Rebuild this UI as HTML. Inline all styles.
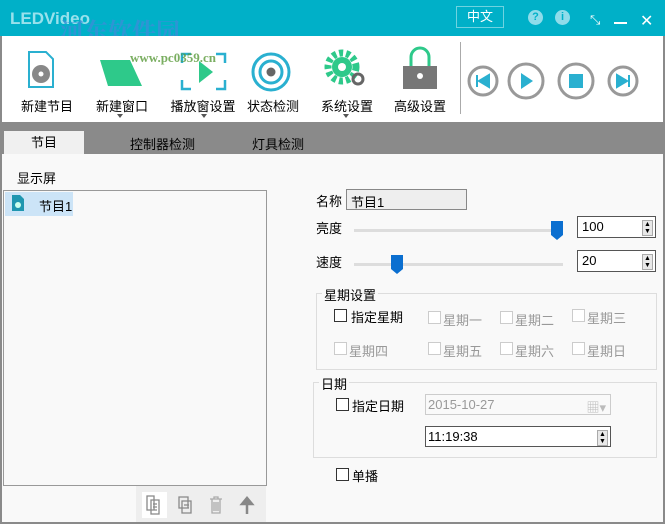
<!DOCTYPE html><html><head><meta charset="utf-8"><style>
*{margin:0;padding:0;box-sizing:border-box}
body{width:665px;height:524px;overflow:hidden;font-family:"Liberation Sans","Noto Sans CJK SC",sans-serif;font-size:13px;color:#000;background:#8a8a8a;position:relative}
.a{position:absolute}
.cb{position:absolute;width:13px;height:13px;border:1px solid #333;background:#fff}
.cb.d{border-color:#ccc}
.g{color:#999}
.tl{font-size:13px;text-align:center;width:80px}
.spin{position:absolute;right:2px;top:3px;width:11px;height:16px;border:1px solid #aaa;background:#e8e8e8;font-size:7px;line-height:7px;text-align:center}
</style></head><body>
<div class="a" style="left:0;top:0;width:665px;height:36px;background:#00b0c8"></div>
<div class="a" style="left:10px;top:9px;color:#bfeef5;font-size:17px;font-weight:bold;opacity:.8">LEDVideo</div>
<div class="a" style="left:60px;top:12px;color:#3a8fd8;font-size:24px;font-weight:bold;font-family:'Noto Serif CJK SC',serif;opacity:.8">河东软件园</div>
<div class="a" style="left:456px;top:6px;width:48px;height:22px;border:1px solid #6fd3e0;color:#fff;font-size:13px;text-align:center;line-height:20px">中文</div>
<div class="a" style="left:528px;top:10px;width:15px;height:15px;border-radius:50%;background:#8fdcea;color:#00b0c8;font-size:11px;text-align:center;line-height:15px;font-weight:bold">?</div>
<div class="a" style="left:555px;top:10px;width:15px;height:15px;border-radius:50%;background:#8fdcea;color:#00b0c8;font-size:11px;text-align:center;line-height:15px;font-weight:bold">i</div>
<div class="a" style="left:590px;top:12px;color:#fff;font-size:13px">⤡</div>
<div class="a" style="left:614px;top:22px;width:13px;height:2px;background:#fff"></div>
<div class="a" style="left:640px;top:11px;color:#fff;font-size:16px">✕</div>
<div class="a" style="left:2px;top:36px;width:661px;height:86px;background:#fff"></div>
<svg class="a" style="left:0;top:36px" width="665" height="86">
<g><path d="M29 16h17l7 7v28H29z" fill="#fff" stroke="#2ab0d0" stroke-width="2"/><circle cx="41" cy="38" r="9" fill="#888"/><circle cx="41" cy="38" r="2.5" fill="#fff"/></g>
<path d="M100 24h30l12 26h-34z" fill="#2ec98a"/>
<g stroke="#2ab0d0" stroke-width="2.5" fill="none"><path d="M182 27v-9h9M216 18h9v9M225 44v9h-9M191 53h-9v-9"/></g><path d="M199 25l14 11-14 11z" fill="#2ec98a"/>
<circle cx="271" cy="36" r="18" fill="none" stroke="#2ab0d0" stroke-width="3"/><circle cx="271" cy="36" r="11" fill="none" stroke="#2ab0d0" stroke-width="3"/><circle cx="271" cy="36" r="4.5" fill="#666"/>
<circle cx="342" cy="31" r="14" fill="none" stroke="#2ec98a" stroke-width="7" stroke-dasharray="4 3"/><circle cx="342" cy="31" r="10" fill="#2ec98a"/><circle cx="342" cy="31" r="4" fill="#fff"/><circle cx="358" cy="43" r="5" fill="none" stroke="#666" stroke-width="3"/>
<path d="M411 30v-9a9 9 0 0 1 18 0v9" fill="none" stroke="#2ec98a" stroke-width="3"/><rect x="403" y="30" width="34" height="23" fill="#777"/><circle cx="420" cy="40" r="3" fill="#fff"/>
<line x1="460.5" y1="6" x2="460.5" y2="78" stroke="#aaa"/>
<circle cx="483" cy="45" r="14" fill="none" stroke="#999" stroke-width="3"/><path d="M477 39v12M489 39l-10 6 10 6z" stroke="#2ab0d0" fill="#2ab0d0" stroke-width="2"/>
<circle cx="526" cy="45" r="17" fill="none" stroke="#999" stroke-width="3"/><path d="M521 37l12 8-12 8z" fill="#2ab0d0"/>
<circle cx="576" cy="45" r="17" fill="none" stroke="#999" stroke-width="3"/><rect x="569" y="38" width="14" height="14" fill="#2ab0d0"/>
<circle cx="623" cy="45" r="14" fill="none" stroke="#999" stroke-width="3"/><path d="M629 39v12M617 39l10 6-10 6z" stroke="#2ab0d0" fill="#2ab0d0" stroke-width="2"/>
<g fill="#555"><path d="M117 78l3 4 3-4zM201 78l3 4 3-4zM343 78l3 4 3-4z"/></g>
</svg>
<div class="a" style="left:130px;top:50px;color:#5a9a3a;font-size:13px;font-weight:bold;font-family:'Liberation Serif',serif;opacity:.8">www.pc0359.cn</div>
<div class="a tl" style="left:7px;top:96px">新建节目</div>
<div class="a tl" style="left:82px;top:96px">新建窗口</div>
<div class="a tl" style="left:163px;top:96px">播放窗设置</div>
<div class="a tl" style="left:233px;top:96px">状态检测</div>
<div class="a tl" style="left:307px;top:96px">系统设置</div>
<div class="a tl" style="left:380px;top:96px">高级设置</div>
<div class="a" style="left:4px;top:131px;width:80px;height:23px;background:#f0f0f0;text-align:center;line-height:23px">节目</div>
<div class="a" style="left:130px;top:134px">控制器检测</div>
<div class="a" style="left:252px;top:134px">灯具检测</div>
<div class="a" style="left:2px;top:154px;width:661px;height:368px;background:#f9f9f9"></div>
<div class="a" style="left:17px;top:168px">显示屏</div>
<div class="a" style="left:3px;top:190px;width:264px;height:296px;border:1px solid #999;background:#f9f9f9"></div>
<div class="a" style="left:5px;top:192px;width:68px;height:24px;background:#cce4f7"></div>
<svg class="a" style="left:11px;top:194px" width="14" height="18"><path d="M1 1h8l4 4v12H1z" fill="#1f96b0"/><circle cx="7" cy="11" r="3" fill="#cfe"/></svg>
<div class="a" style="left:39px;top:196px">节目1</div>
<div class="a" style="left:136px;top:486px;width:130px;height:36px;background:#eee"></div>
<div class="a" style="left:142px;top:492px;width:25px;height:26px;background:#fff"></div>
<svg class="a" style="left:144px;top:494px" width="120" height="22" fill="none" stroke="#888" stroke-width="1.3">
<path d="M3 2h7v14H3z M7 6h8v14H7z M9 10h4M9 13h4M9 16h4"/>
<path d="M35 3h9v11h-9z M38 7h9v12h-9z M40 11h5M40 14h5"/>
<path d="M66 5h12M70 5v-2h4v2M68 5v14h8v-14M70 8v9M72 8v9M74 8v9" stroke="#aaa"/>
<path d="M103 20v-14M98 10l5-6 5 6z" stroke-width="2.5" fill="#888"/>
</svg>
<div class="a" style="left:316px;top:191px">名称</div>
<div class="a" style="left:346px;top:189px;width:121px;height:21px;border:1px solid #888;background:#eee;padding:2px 4px">节目1</div>
<div class="a" style="left:316px;top:218px">亮度</div>
<div class="a" style="left:354px;top:229px;width:209px;height:3px;background:#ddd"></div>
<svg class="a" style="left:551px;top:221px" width="13" height="20"><path d="M0 0h12v14l-6 5-6-5z" fill="#0b6fd0"/></svg>
<div class="a" style="left:577px;top:216px;width:79px;height:22px;border:1px solid #555;background:#fff;padding:2px 4px">100<div class="spin">▲<br>▼</div></div>
<div class="a" style="left:316px;top:252px">速度</div>
<div class="a" style="left:354px;top:263px;width:209px;height:3px;background:#ddd"></div>
<svg class="a" style="left:391px;top:255px" width="13" height="20"><path d="M0 0h12v14l-6 5-6-5z" fill="#0b6fd0"/></svg>
<div class="a" style="left:577px;top:250px;width:79px;height:22px;border:1px solid #555;background:#fff;padding:2px 4px">20<div class="spin">▲<br>▼</div></div>
<div class="a" style="left:316px;top:293px;width:341px;height:77px;border:1px solid #ddd"></div>
<div class="a" style="left:322px;top:285px;background:#f9f9f9;padding:0 2px">星期设置</div>
<div class="cb" style="left:334px;top:309px"></div><div class="a" style="left:351px;top:307px">指定星期</div>
<div class="cb d" style="left:428px;top:311px"></div><div class="a g" style="left:443px;top:310px">星期一</div>
<div class="cb d" style="left:500px;top:311px"></div><div class="a g" style="left:515px;top:310px">星期二</div>
<div class="cb d" style="left:572px;top:309px"></div><div class="a g" style="left:587px;top:308px">星期三</div>
<div class="cb d" style="left:334px;top:342px"></div><div class="a g" style="left:349px;top:341px">星期四</div>
<div class="cb d" style="left:428px;top:342px"></div><div class="a g" style="left:443px;top:341px">星期五</div>
<div class="cb d" style="left:500px;top:342px"></div><div class="a g" style="left:515px;top:341px">星期六</div>
<div class="cb d" style="left:572px;top:342px"></div><div class="a g" style="left:587px;top:341px">星期日</div>
<div class="a" style="left:313px;top:382px;width:344px;height:76px;border:1px solid #ddd"></div>
<div class="a" style="left:319px;top:374px;background:#f9f9f9;padding:0 2px">日期</div>
<div class="cb" style="left:336px;top:398px"></div><div class="a" style="left:352px;top:396px">指定日期</div>
<div class="a g" style="left:425px;top:394px;width:186px;height:21px;border:1px solid #ccc;background:#f9f9f9;padding:2px 2px">2015-10-27<span style="position:absolute;right:4px;top:2px;color:#bbb">▦▾</span></div>
<div class="a" style="left:425px;top:426px;width:186px;height:21px;border:1px solid #555;background:#fff;padding:2px 2px">11:19:38<div class="spin">▲<br>▼</div></div>
<div class="cb" style="left:336px;top:468px"></div><div class="a" style="left:352px;top:466px">单播</div>
</body></html>
